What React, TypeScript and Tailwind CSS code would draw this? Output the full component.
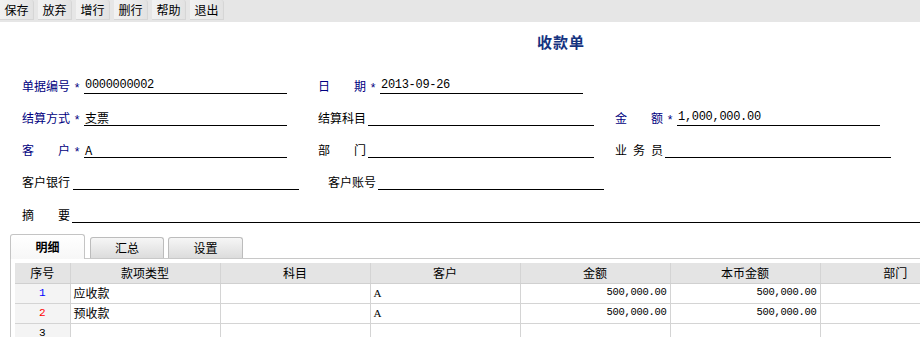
import React from "react";

const CJK = "font-['SimSun','Noto_Sans_CJK_SC',sans-serif]";
const MONO = "font-['Liberation_Mono','Noto_Sans_CJK_SC',monospace]";

function Label({ text, blue, w = 48 }: { text: string; blue?: boolean; w?: number }) {
  const chars = text.split("");
  return (
    <span
      className={`flex justify-between text-[12px] leading-[16px] ${blue ? "text-[#000080]" : "text-black"}`}
      style={{ width: w }}
    >
      {chars.map((c, i) => (
        <span key={i}>{c}</span>
      ))}
    </span>
  );
}

function Star() {
  return (
    <span className="w-[14px] h-[16px] flex justify-center text-[12px] leading-[14px] text-[#000080] font-['Liberation_Mono',monospace] translate-y-[4px]">
      *
    </span>
  );
}

function Field({ w, value, mono, ml = 0 }: { w: number; value?: string; mono?: boolean; ml?: number }) {
  return (
    <div
      className={`h-[16px] border-b border-black flex items-end pl-[1px] text-[12px] leading-[15px] text-black ${mono ? MONO + " text-[10.5px] tracking-[-0.3px] text-[#111]" : ""}`}
      style={{ width: w, marginLeft: ml }}
    >
      {value}
    </div>
  );
}

const toolbar = ["保存", "放弃", "增行", "删行", "帮助", "退出"];

const columns = [
  { name: "序号", w: 55 },
  { name: "款项类型", w: 150 },
  { name: "科目", w: 150 },
  { name: "客户", w: 150 },
  { name: "金额", w: 150 },
  { name: "本币金额", w: 150 },
  { name: "部门", w: 150 },
];

const rows = [
  { n: "1", color: "text-[#0000ff]", type: "应收款", cust: "A", amt: "500,000.00", base: "500,000.00" },
  { n: "2", color: "text-[#ff0000]", type: "预收款", cust: "A", amt: "500,000.00", base: "500,000.00" },
  { n: "3", color: "text-black", type: "", cust: "", amt: "", base: "" },
];

export default function App() {
  return (
    <div className={`w-[920px] h-[337px] bg-white overflow-hidden ${CJK}`}>
      {/* toolbar */}
      <div className="h-[22px] bg-[#e6e6e6] flex items-start gap-[4px]">
        {toolbar.map((t) => (
          <div
            key={t}
            className="h-[20px] w-[34px] flex items-center justify-center text-[12px] text-black bg-gradient-to-r from-[#f2f2f2] via-[#ececec] to-[#e2e2e2] border-r border-b border-[#d6d6d6] rounded-tr-[3px]"
          >
            {t}
          </div>
        ))}
      </div>

      {/* title */}
      <div className="h-[40px] flex items-center pl-[537px]">
        <span className="text-[15px] font-bold text-[#15337f] tracking-[1px]">收款单</span>
      </div>

      {/* form */}
      <div className="flex flex-col">
        <div className="h-[32px] flex items-end pl-[22px]">
          <Label text="单据编号" blue />
          <Star />
          <Field w={203} value="0000000002" mono />
          <div className="w-[31px]" />
          <Label text="日期" blue />
          <Star />
          <Field w={203} value="2013-09-26" mono />
        </div>
        <div className="h-[32px] flex items-end pl-[22px]">
          <Label text="结算方式" blue />
          <Star />
          <Field w={203} value="支票" />
          <div className="w-[31px]" />
          <Label text="结算科目" />
          <Field w={226} ml={2} />
          <div className="w-[21px]" />
          <Label text="金额" blue />
          <Star />
          <Field w={203} value="1,000,000.00" mono />
        </div>
        <div className="h-[32px] flex items-end pl-[22px]">
          <Label text="客户" blue />
          <Star />
          <Field w={203} value="A" />
          <div className="w-[31px]" />
          <Label text="部门" />
          <Field w={226} ml={2} />
          <div className="w-[21px]" />
          <Label text="业务员" />
          <Field w={226} ml={2} />
        </div>
        <div className="h-[32px] flex items-end pl-[22px]">
          <Label text="客户银行" />
          <Field w={226} ml={3} />
          <div className="w-[29px]" />
          <Label text="客户账号" />
          <Field w={226} ml={2} />
        </div>
        <div className="h-[33px] flex items-end pl-[22px]">
          <Label text="摘要" />
          <Field w={848} ml={2} />
        </div>
      </div>

      {/* tabs */}
      <div className="mt-[11px] h-[24px] flex items-end pl-[10px]">
        <div className="relative z-10 -mb-px h-[25px] w-[75px] flex items-center justify-center text-[12px] font-bold text-black bg-gradient-to-b from-white to-[#f7f7f7] border border-b-0 border-[#c4c4c4] rounded-t-[3px]">
          明细
        </div>
        <div className="ml-[5px] h-[21px] w-[74px] flex items-center justify-center text-[12px] text-black bg-gradient-to-b from-[#f6f6f6] to-[#dcdcdc] border border-b-0 border-[#bcbcbc] rounded-t-[3px]">
          汇总
        </div>
        <div className="ml-[4px] h-[21px] w-[75px] flex items-center justify-center text-[12px] text-black bg-gradient-to-b from-[#f6f6f6] to-[#dcdcdc] border border-b-0 border-[#bcbcbc] rounded-t-[3px]">
          设置
        </div>
      </div>
      <div className="ml-[10px] border-t border-l border-[#c8c8c8] pt-[4px] pl-[4px] h-[80px]">
        <table className="border-collapse table-fixed text-[12px] text-black" style={{ width: 955 }}>
          <colgroup>
            {columns.map((c) => (
              <col key={c.name} style={{ width: c.w }} />
            ))}
          </colgroup>
          <thead>
            <tr className="h-[20px] bg-[#e4e4e4]">
              {columns.map((c, i) => (
                <th
                  key={c.name}
                  className={`font-normal text-center p-0 leading-[19px] border-b border-[#d0d0d0] ${i > 0 ? "border-l border-l-[#d4d4d4]" : ""}`}
                >
                  {c.name}
                </th>
              ))}
            </tr>
          </thead>
          <tbody>
            {rows.map((r) => (
              <tr key={r.n} className="h-[20px]">
                <td className={`text-center p-0 bg-[#f4f4f4] border-b border-[#d4d4d4] ${r.color} ${MONO} text-[11px]`}>{r.n}</td>
                <td className="p-0 pl-[3px] border-l border-b border-[#d4d4d4]">{r.type}</td>
                <td className="p-0 border-l border-b border-[#d4d4d4]"></td>
                <td className="p-0 pl-[3px] border-l border-b border-[#d4d4d4] font-['Liberation_Serif',serif] text-[11px]">{r.cust}</td>
                <td className={`p-0 pr-[3px] text-right border-l border-b border-[#d4d4d4] ${MONO} text-[10.5px] tracking-[-0.3px]`}>{r.amt}</td>
                <td className={`p-0 pr-[3px] text-right border-l border-b border-[#d4d4d4] ${MONO} text-[10.5px] tracking-[-0.3px]`}>{r.base}</td>
                <td className="p-0 border-l border-b border-[#d4d4d4]"></td>
              </tr>
            ))}
          </tbody>
        </table>
      </div>
    </div>
  );
}
